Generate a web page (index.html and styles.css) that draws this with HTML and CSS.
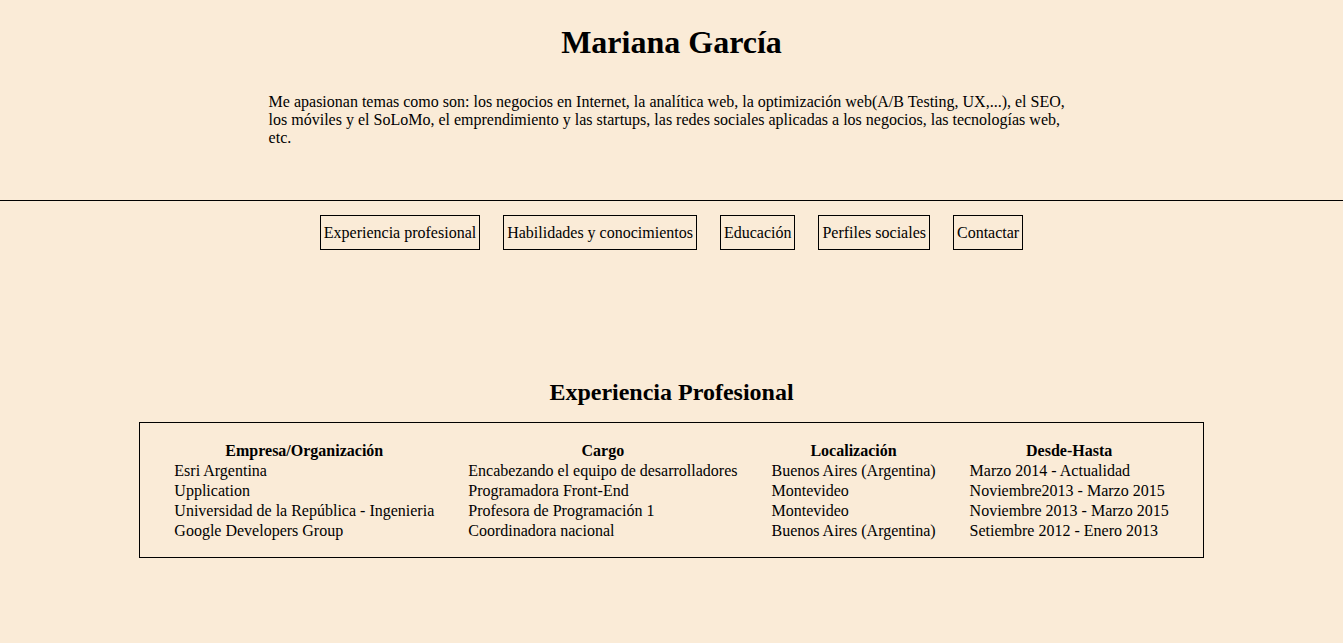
FILE: index.html
```html
<!DOCTYPE html>
<html lang="es">
<head>
<meta charset="utf-8">
<title>Mariana García</title>
<link rel="stylesheet" href="styles.css">
</head>
<body>
<header class="intro">
  <h1 class="name">Mariana García</h1>
  <p class="bio">Me apasionan temas como son: los negocios en Internet, la analítica web, la optimización web(A/B Testing, UX,...), el SEO, los móviles y el SoLoMo, el emprendimiento y las startups, las redes sociales aplicadas a los negocios, las tecnologías web, etc.</p>
</header>
<nav class="menu">
  <a class="menu-item" href="#experiencia">Experiencia profesional</a>
  <a class="menu-item" href="#habilidades">Habilidades y conocimientos</a>
  <a class="menu-item" href="#educacion">Educación</a>
  <a class="menu-item" href="#perfiles">Perfiles sociales</a>
  <a class="menu-item" href="#contactar">Contactar</a>
</nav>
<section class="experience" id="experiencia">
  <h2 class="section-title">Experiencia Profesional</h2>
  <div class="table-box">
    <table class="exp-table">
      <thead>
        <tr><th>Empresa/Organización</th><th>Cargo</th><th>Localización</th><th>Desde-Hasta</th></tr>
      </thead>
      <tbody>
        <tr><td>Esri Argentina</td><td>Encabezando el equipo de desarrolladores</td><td>Buenos Aires (Argentina)</td><td>Marzo 2014 - Actualidad</td></tr>
        <tr><td>Upplication</td><td>Programadora Front-End</td><td>Montevideo</td><td>Noviembre2013 - Marzo 2015</td></tr>
        <tr><td>Universidad de la República - Ingenieria</td><td>Profesora de Programación 1</td><td>Montevideo</td><td>Noviembre 2013 - Marzo 2015</td></tr>
        <tr><td>Google Developers Group</td><td>Coordinadora nacional</td><td>Buenos Aires (Argentina)</td><td>Setiembre 2012 - Enero 2013</td></tr>
      </tbody>
    </table>
  </div>
</section>
</body>
</html>
```
FILE: styles.css
```css
html, body {
  margin: 0;
  padding: 0;
}
body {
  background: #faebd7;
  color: #000;
  font-family: "Liberation Serif", "Times New Roman", serif;
  font-size: 16px;
}
.intro {
  padding-top: 24px;
  padding-bottom: 53px;
}
.name {
  margin: 0;
  font-size: 32px;
  font-weight: bold;
  text-align: center;
}
.bio {
  width: 60%;
  margin: 32px auto 0;
}
.menu {
  border-top: 1px solid #000;
  padding-top: 14px;
  display: flex;
  justify-content: center;
  gap: 23px;
}
.menu-item {
  color: #000;
  text-decoration: none;
  border: 1px solid #000;
  padding: 8px 3px 7px;
  line-height: 18px;
}
.experience {
  padding-top: 129px;
}
.section-title {
  margin: 0 0 16px;
  font-size: 24px;
  text-align: center;
}
.table-box {
  width: 1063px;
  margin: 0 auto;
  border: 1px solid #000;
  padding: 18px 0 16px;
}
.exp-table {
  margin: 0 auto;
  border-collapse: collapse;
  line-height: 20px;
}
.exp-table th,
.exp-table td {
  padding: 0 17px;
  white-space: nowrap;
}
.exp-table th {
  text-align: center;
}
.exp-table td {
  text-align: left;
}
```
